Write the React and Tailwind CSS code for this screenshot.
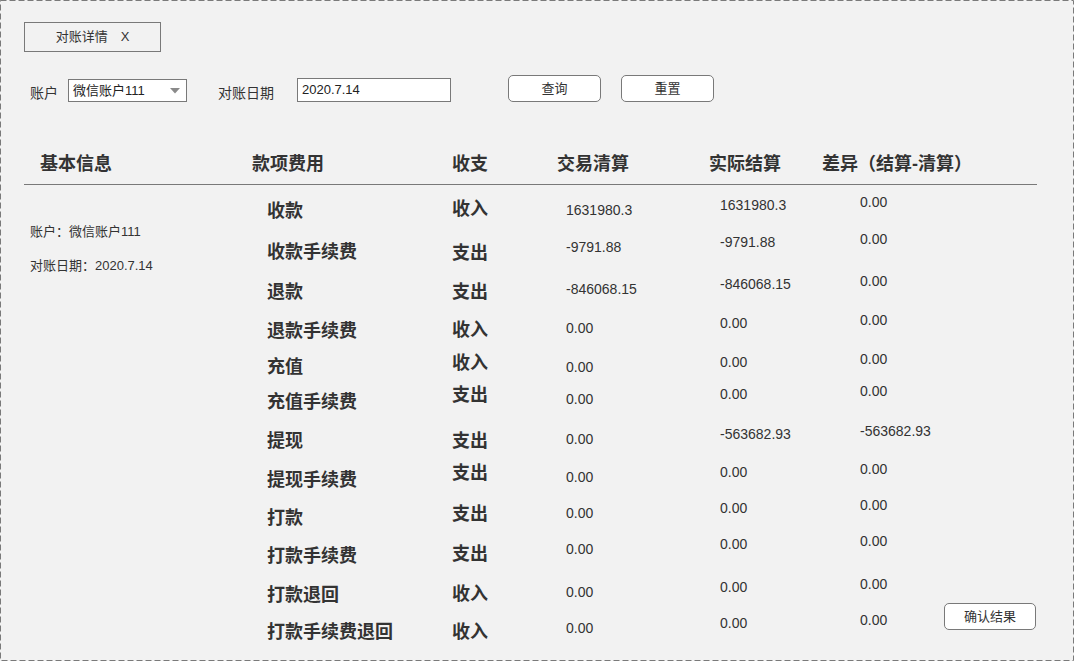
import React from "react";

const rows = [
  { cat: "收款", catPt: "pt-[7px]", io: "收入", ioPt: "pt-[5px]", h: "h-[37px]", a: "1631980.3", b: "1631980.3", c: "0.00" },
  { cat: "收款手续费", catPt: "pt-[11px]", io: "支出", ioPt: "pt-[12px]", h: "h-[42px]", a: "-9791.88", b: "-9791.88", c: "0.00" },
  { cat: "退款", catPt: "pt-[9px]", io: "支出", ioPt: "pt-[9px]", h: "h-[39px]", a: "-846068.15", b: "-846068.15", c: "0.00" },
  { cat: "退款手续费", catPt: "pt-[9px]", io: "收入", ioPt: "pt-[8px]", h: "h-[39px]", a: "0.00", b: "0.00", c: "0.00" },
  { cat: "充值", catPt: "pt-[6px]", io: "收入", ioPt: "pt-[2px]", h: "h-[32px]", a: "0.00", b: "0.00", c: "0.00" },
  { cat: "充值手续费", catPt: "pt-[9px]", io: "支出", ioPt: "pt-[2px]", h: "h-[40px]", a: "0.00", b: "0.00", c: "0.00" },
  { cat: "提现", catPt: "pt-[8px]", io: "支出", ioPt: "pt-[8px]", h: "h-[38px]", a: "0.00", b: "-563682.93", c: "-563682.93" },
  { cat: "提现手续费", catPt: "pt-[9px]", io: "支出", ioPt: "pt-[2px]", h: "h-[36px]", a: "0.00", b: "0.00", c: "0.00" },
  { cat: "打款", catPt: "pt-[11px]", io: "支出", ioPt: "pt-[7px]", h: "h-[36px]", a: "0.00", b: "0.00", c: "0.00" },
  { cat: "打款手续费", catPt: "pt-[13px]", io: "支出", ioPt: "pt-[11px]", h: "h-[43px]", a: "0.00", b: "0.00", c: "0.00" },
  { cat: "打款退回", catPt: "pt-[9px]", io: "收入", ioPt: "pt-[8px]", h: "h-[36px]", a: "0.00", b: "0.00", c: "0.00" },
  { cat: "打款手续费退回", catPt: "pt-[10px]", io: "收入", ioPt: "pt-[10px]", h: "h-[36px]", a: "0.00", b: "0.00", c: "0.00", last: true },
];

export default function App() {
  return (
    <div className="relative w-[1074px] h-[661px] bg-[#f2f2f2] text-[#333333] font-['Liberation_Sans','Noto_Sans_CJK_SC',sans-serif] pl-[24px] pt-[1px] overflow-hidden">
      {/* dashed frame */}
      <svg className="absolute inset-0 pointer-events-none" width="1074" height="661" viewBox="0 0 1074 661">
        <rect x="0.5" y="0.5" width="1073" height="660" fill="none" stroke="#7a7a7a" strokeWidth="1" strokeDasharray="6 3" />
      </svg>

      {/* tab */}
      <div className="mt-[21px] w-[137px] h-[30px] border border-[#797979] flex items-center justify-center text-[13px] leading-[18px]">
        <span>对账详情</span>
        <span className="ml-[13px]">X</span>
      </div>

      {/* filter row */}
      <div className="mt-[23px] flex items-start h-[27px]">
        <span className="ml-[6px] mt-[8px] text-[14px] leading-[20px] w-[38px]">账户</span>
        <div className="mt-[4px] w-[119px] h-[23px] bg-white border border-[#797979] flex items-center justify-between pl-[4px] pr-[6px]">
          <span className="text-[13px] leading-[18px] text-[#222]">微信账户111</span>
          <svg width="10" height="6" viewBox="0 0 10 6">
            <polygon points="0,0 10,0 5,5.5" fill="#8a8a8a" />
          </svg>
        </div>
        <span className="ml-[31px] mt-[8px] text-[14px] leading-[20px] w-[79px]">对账日期</span>
        <div className="mt-[3px] w-[154px] h-[24px] bg-white border border-[#797979] flex items-center pl-[4px]">
          <span className="text-[13px] leading-[18px] text-[#222]">2020.7.14</span>
        </div>
        <button className="ml-[57px] w-[93px] h-[27px] bg-white border border-[#797979] rounded-[5px] text-[13px] leading-[18px] flex items-center justify-center">
          查询
        </button>
        <button className="ml-[20px] w-[93px] h-[27px] bg-white border border-[#797979] rounded-[5px] text-[13px] leading-[18px] flex items-center justify-center">
          重置
        </button>
      </div>

      {/* table header */}
      <div className="mt-[50px] w-[1013px] h-[33px] border-b border-[#797979] flex items-start text-[18px] leading-[24px] font-bold">
        <div className="w-[228px] pl-[16px]">基本信息</div>
        <div className="w-[200px]">款项费用</div>
        <div className="w-[105px]">收支</div>
        <div className="w-[152px]">交易清算</div>
        <div className="w-[113px]">实际结算</div>
        <div>差异（结算-清算）</div>
      </div>

      {/* body */}
      <div className="flex items-start">
        <div className="w-[243px] pl-[6px] pt-[38px] text-[13px] leading-[18px]">
          <div>账户：微信账户111</div>
          <div className="mt-[16px]">对账日期：2020.7.14</div>
        </div>
        <div className="pt-[7px] flex flex-col">
          {rows.map((r) => (
            <div key={r.cat} className={`flex items-start ${r.h}`}>
              <div className={`w-[185px] text-[18px] leading-[24px] font-bold ${r.catPt}`}>{r.cat}</div>
              <div className={`w-[114px] text-[18px] leading-[24px] font-bold ${r.ioPt}`}>{r.io}</div>
              <div className="w-[154px] pt-[10px] text-[14px] leading-[16px]">{r.a}</div>
              <div className="w-[140px] pt-[5px] text-[14px] leading-[16px]">{r.b}</div>
              <div className="w-[84px] pt-[2px] text-[14px] leading-[16px] whitespace-nowrap">{r.c}</div>
              {r.last && (
                <button className="-mt-[7px] w-[92px] h-[27px] bg-white border border-[#797979] rounded-[5px] text-[13px] leading-[18px] flex items-center justify-center">
                  确认结果
                </button>
              )}
            </div>
          ))}
        </div>
      </div>
    </div>
  );
}
